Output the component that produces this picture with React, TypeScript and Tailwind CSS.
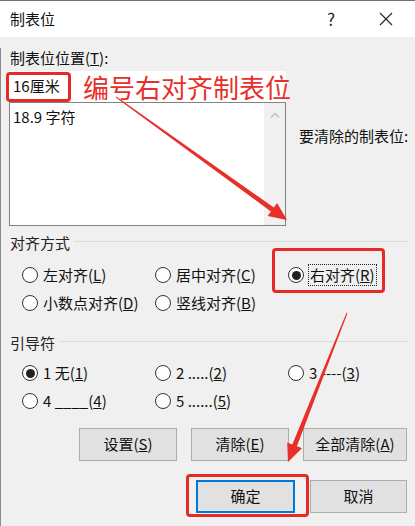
import React from 'react';

const FONT = '"Noto Sans CJK SC", "Microsoft YaHei", sans-serif';

// Radio button with a label
const Radio: React.FC<{ label: React.ReactNode; checked?: boolean; focus?: boolean }> = ({
  label,
  checked = false,
  focus = false,
}) => (
  <div className="flex items-center h-[28px]">
    <span className="w-[16px] h-[16px] rounded-full border border-[#333333] bg-white flex items-center justify-center shrink-0">
      {checked && <span className="w-[9px] h-[9px] rounded-full bg-[#222222]" />}
    </span>
    <span
      className={
        focus
          ? 'ml-[4px] px-[1px] h-[22px] flex items-center border border-dotted border-[#222222]'
          : 'ml-[5px] h-[22px] flex items-center'
      }
    >
      {label}
    </span>
  </div>
);

// Group header: caption followed by a thin etched line
const GroupHeader: React.FC<{ title: string }> = ({ title }) => (
  <div className="flex items-center h-[20px] pl-[1px] pr-[7px]">
    <span className="text-[#222222]">{title}</span>
    <div className="flex-1 h-px bg-[#dcdcdc] ml-[4px] -mt-[4px]" />
  </div>
);

const Btn: React.FC<{ label: React.ReactNode; w: string; focused?: boolean }> = ({ label, w, focused }) => (
  <div
    className={
      (focused ? 'border-2 border-[#0078d7] ' : 'border border-[#adadad] ') +
      'h-[33px] bg-[#e1e1e1] flex items-center justify-center text-[#111111] ' +
      w
    }
  >
    {label}
  </div>
);

export default function App() {
  return (
    <div
      className="relative w-[415px] h-[526px] overflow-hidden bg-[#f0f0f0] text-[15px] text-[#111111] border-t border-[#707070]"
      style={{ fontFamily: FONT }}
    >
      {/* Title bar */}
      <div className="h-[36px] bg-white flex items-center pl-[10px]">
        <span className="flex-1 text-[15px] text-[#111111]">制表位</span>
        <span className="text-[17px] text-[#222222] w-[20px] text-center mr-[38px]">?</span>
        <svg width="14" height="14" viewBox="0 0 14 14" className="mr-[22px]">
          <path d="M1 1 L13 13 M13 1 L1 13" stroke="#222" strokeWidth="1.1" />
        </svg>
      </div>

      {/* Body */}
      <div className="border-l border-[#8c8c8c] h-[489px] pl-[8px]">
        <div className="h-[20px] mt-[11px] flex items-center pl-[1px]">
          制表位位置(<u>T</u>):
        </div>

        <div className="flex mt-[3px]">
          <div className="w-[277px] flex flex-col">
            <div className="h-[31px] bg-white flex items-center pl-[4px]">16厘米</div>
            <div className="h-[124px] border border-[#828282] bg-white flex">
              <div className="flex-1 pl-[3px] pt-[2px] leading-[24px]">18.9 字符</div>
              <div className="w-[21px] bg-[#f0f0f0] flex justify-center pt-[9px]">
                <svg width="10" height="6" viewBox="0 0 10 6">
                  <path d="M1 5.5 L5 1.5 L9 5.5" stroke="#c2c2c2" strokeWidth="1.4" fill="none" />
                </svg>
              </div>
            </div>
          </div>
          <div className="pl-[13px] pt-[54px]">要清除的制表位:</div>
        </div>

        {/* Alignment */}
        <div className="mt-[7px]">
          <GroupHeader title="对齐方式" />
          <div className="grid grid-cols-[133px_133px_1fr] pl-[13px] mt-[8px]">
            <Radio label={<>左对齐(<u>L</u>)</>} />
            <Radio label={<>居中对齐(<u>C</u>)</>} />
            <Radio label={<>右对齐(<u>R</u>)</>} checked focus />
            <Radio label={<>小数点对齐(<u>D</u>)</>} />
            <Radio label={<>竖线对齐(<u>B</u>)</>} />
          </div>
        </div>

        {/* Leader */}
        <div className="mt-[16px]">
          <GroupHeader title="引导符" />
          <div className="grid grid-cols-[133px_133px_1fr] pl-[13px] mt-[6px]">
            <Radio label={<>1 无(<u>1</u>)</>} checked />
            <Radio label={<>2 .....(<u>2</u>)</>} />
            <Radio label={<>3 ----(<u>3</u>)</>} />
            <Radio label={<>4 ____(<u>4</u>)</>} />
            <Radio label={<>5 ......(<u>5</u>)</>} />
          </div>
        </div>

        {/* Buttons */}
        <div className="flex justify-end gap-[14px] pr-[8px] mt-[13px]">
          <Btn label={<>设置(<u>S</u>)</>} w="w-[98px]" />
          <Btn label={<>清除(<u>E</u>)</>} w="w-[98px]" />
          <Btn label={<>全部清除(<u>A</u>)</>} w="w-[104px]" />
        </div>
        <div className="flex justify-end gap-[15px] pr-[8px] mt-[19px]">
          <Btn label="确定" w="w-[99px]" focused />
          <Btn label="取消" w="w-[97px]" />
        </div>
      </div>

      {/* Annotations */}
      <div className="absolute left-[83px] top-[70px] text-[26px] leading-[32px] text-[#e8302a]">
        编号右对齐制表位
      </div>
      <div className="absolute left-[6px] top-[71px] w-[65px] h-[30px] border-[3px] border-[#e52b25] rounded-[4px]" />
      <div className="absolute left-[272px] top-[247px] w-[113px] h-[45px] border-[3px] border-[#e52b25] rounded-[4px]" />
      <div className="absolute left-[186px] top-[473px] w-[123px] h-[43px] border-[3px] border-[#e52b25] rounded-[4px]" />

      <svg className="absolute left-0 top-0 pointer-events-none" width="415" height="526" viewBox="0 0 415 526">
        <polygon
          points="115.7,96.4 116.3,95.6 273.9,206.5 277.1,202.0 287,219 267.7,215.0 270.9,210.5"
          fill="#e8302a"
        />
        <polygon
          points="347.5,312.2 346.5,311.8 292.3,443.4 287.2,441.4 288,461 302.0,447.2 296.9,445.2"
          fill="#e8302a"
        />
      </svg>
    </div>
  );
}
